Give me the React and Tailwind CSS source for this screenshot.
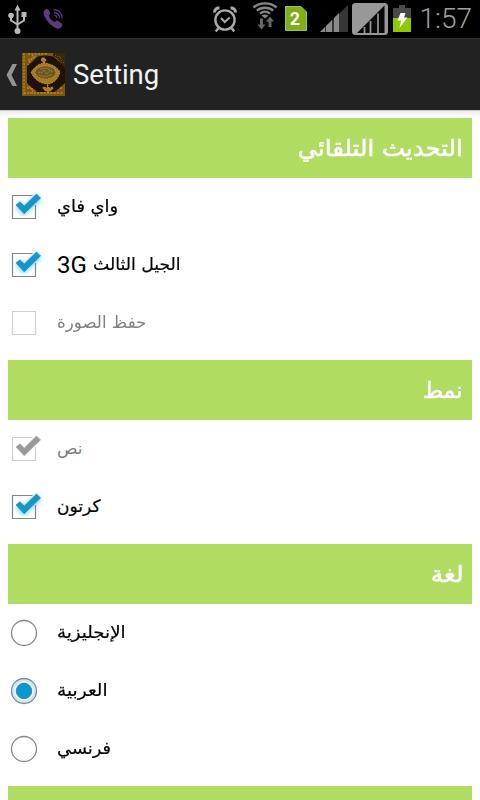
import React from 'react';

function StatusBar() {
  return (
    <div className="relative flex h-[38px] shrink-0 bg-black">
      <svg width="480" height="38" viewBox="0 0 480 38" className="block">
        {/* USB */}
        <g fill="none" stroke="#b8b8b8" strokeWidth="2">
          <path d="M17.500 8V31M11 17v3.500l6.500 4M24 16v4.500l-6.500 4" />
        </g>
        <g fill="#b8b8b8">
          <path d="M17.500 4.500l3 6h-6z" />
          <circle cx="11" cy="15.500" r="2.800" />
          <rect x="21.500" y="12" width="5" height="5" />
          <circle cx="17.500" cy="31" r="3" />
        </g>
        {/* Call */}
        <path
          d="M45.500 9.500c1.500-1 2.500-.5 3.300.8l1.200 2.400c.5 1.200 0 2-1.300 2.800 1 3 3 5.300 6 6.700 1-1.500 2-1.800 3.200-1.200l3.300 2c1.300.9 1.500 2 .7 3.300-1.300 2-3 2.900-5 2.200C50.500 26 46 20.500 43.700 14c-.6-2 .2-3.500 1.800-4.500z"
          fill="#5e3a80"
        />
        <g fill="none" stroke="#5e3a80" strokeWidth="1.300">
          <path d="M53.500 9.500c5 .2 8.700 3.700 8.700 9M54 12.500c3.500.3 5.500 2.500 5.600 5.700M54.500 15.300c1.500.2 2.300 1 2.500 2.500" />
        </g>
        {/* Alarm clock */}
        <g fill="none" stroke="#aaaaaa" strokeWidth="2.400">
          <circle cx="225" cy="20" r="9.600" />
          <path d="M221 18l3.700 4 5-4.500" strokeWidth="2" />
          <path d="M214.500 12.500c0-3 2-4.800 5-4.500M235.500 12.500c0-3-2-4.800-5-4.500" strokeWidth="3" />
          <path d="M218.500 28l-2.700 3.500M231.500 28l2.700 3.500" />
        </g>
        {/* Wi-Fi */}
        <g fill="none" stroke="#858585" strokeWidth="2.400">
          <path d="M253.500 7.500c6-5.500 17-5.500 23 0M256.800 10.700c4.500-4 12-4 16.400 0M260 13.600c3-2.500 7-2.500 10 0" />
        </g>
        <path d="M261.500 15.500c2-1.500 5-1.500 7 0L265 18.500z" fill="#858585" />
        <path d="M260 18.500h3v6h2.500l-4 5-4-5h2.500zM268.500 27v-5.500H266l4-5 4 5h-2.500V27z" fill="#666666" />
        {/* SIM 2 */}
        <path d="M285.500 6.500H301l5.500 5.500v18.500h-21z" fill="#7fae16" stroke="#a0bd68" />
        <text x="295" y="25" textAnchor="middle" fontFamily="Roboto" fontWeight="700" fontSize="18" fill="#ffffff">2</text>
        {/* Signal */}
        <path d="M320 32L348 5v27z" fill="#363636" />
        <path d="M320 32h5v-5zM326 32h6V20l-6 6zM334 32h5V13l-5 5z" fill="#8b8b8b" />
        {/* Second signal */}
        <rect x="352" y="3" width="36" height="32" rx="3.500" fill="#989898" />
        <path d="M357 33L384.500 5.500V33z" fill="#080808" />
        <path d="M364.500 27v6M370.500 21v12M378 13.500V33" stroke="#989898" strokeWidth="1.700" />
        {/* Battery */}
        <path d="M399 5h6v3h6v11h-18V8h6z" fill="#484848" />
        <rect x="393" y="18" width="18" height="14" fill="#91c900" />
        <path d="M400.500 13h5l-1.500 4.500h3.500L399.500 28l1.500-7.500h-3.500z" fill="#ffffff" />
      </svg>
      <span className="absolute top-0 right-[8px] h-[38px] font-[Roboto,sans-serif] text-[28px] leading-[38px] font-light text-[#a0a0a0]">1:57</span>
    </div>
  );
}

function BookIcon() {
  return (
    <svg width="43" height="43" viewBox="0 0 43 43" className="ml-[5px] shrink-0">
      <rect width="43" height="43" fill="#7d5710" />
      <g fill="none" stroke="#c08b20" strokeWidth="1.300" strokeDasharray="2 1.300">
        <path d="M2 0v43M2 40h39M6 13c1-5 4-8 9-10M6 7c3 0 5-2 5-5M6 30c1 5 5 7 11 8M5 35c4 0 5 1 6 4M40 30c-1 5-5 7-11 8M40 35c-4 0-6 1-7 4M6 1h20" />
      </g>
      <path d="M15 4c4-2 12-2 17 0l11 10v16c-3 3-7 6-10 9H15C13 36 8 34 5 30V13c3-2 7-6 10-9z" fill="#1f1208" />
      <path d="M31 0h12v15C38 10 37 5 31 3z" fill="#3a2608" />
      <path d="M33 2l3 2 2-1 1 4 3 3" fill="none" stroke="#76551a" strokeDasharray="1.500 1" />
      <path
        d="M21 5c3 0 4 2 1 5 8 1 13 4 16 9-2 7-6 11-12 12-1 2-1 3 1 4l4-1c0 3-3 4-5 5-2-1-5-2-5-5l4 1c2-1 1-3 0-4-8-1-13-5-16-12 4-5 7-8 13-9-4-3-3-5-1-5z"
        fill="#a77a20"
        stroke="#d3a443"
        strokeWidth=".8"
        strokeDasharray="2 1"
      />
      <ellipse cx="23.500" cy="19.500" rx="10.500" ry="6.500" fill="#6e5522" stroke="#c29844" strokeWidth=".8" strokeDasharray="2 1" />
      <path d="M16 19l4 1 2-3 3 4 3-4 3 2M17 22c4 2 9 2 13-1M18 16c3-1 8-1 10 1" fill="none" stroke="#a58a48" strokeWidth=".8" strokeDasharray="2 .7" />
    </svg>
  );
}

function ActionBar() {
  return (
    <header className="flex h-[72px] shrink-0 items-center border-t border-[#303030] bg-[#222222] pl-[6px]">
      <svg width="11" height="22" viewBox="0 0 11 22" className="shrink-0">
        <path d="M6.500 0H11L5.500 11 11 22H6.500L.5 11z" fill="#949494" />
      </svg>
      <BookIcon />
      <h1 className="ml-[8px] font-[Roboto,sans-serif] text-[27.500px] leading-8 font-normal text-[#f3f3f3]">Setting</h1>
    </header>
  );
}

function Checkbox({ checked, disabled }) {
  return (
    <svg width="36" height="36" viewBox="0 0 36 36" className="shrink-0">
      <defs>
        <filter id="glow" x="-30%" y="-30%" width="160%" height="160%">
          <feGaussianBlur stdDeviation="2" />
        </filter>
      </defs>
      {checked && !disabled && <path d="M10 16l6 6L31 8" fill="none" stroke="#8edcfb" strokeWidth="8" filter="url(#glow)" />}
      <path
        d={checked ? 'M24.500 6.500h-20v23h23V16' : 'M4.500 6.500h23v23h-23z'}
        fill="none"
        stroke={disabled ? '#cecece' : '#858585'}
        strokeWidth="1.200"
      />
      {checked && <path d="M8 16l4-3.200 4.300 4.200L28.500 5l4 4-16.300 15.800z" fill={disabled ? '#999999' : '#1197c9'} stroke={disabled ? '#aaaaaa' : '#3885a5'} strokeWidth=".7" />}
    </svg>
  );
}

function Radio({ checked }) {
  return (
    <svg width="36" height="36" viewBox="0 0 36 36" className="shrink-0">
      <circle cx="16" cy="18" r="12.500" fill={checked ? '#c9e9f6' : '#ffffff'} stroke="#898989" strokeWidth="1.300" />
      {checked && <circle cx="16" cy="18" r="10" fill="#e6f5fb" />}
      {checked && <circle cx="16" cy="18" r="7.700" fill="#0799cf" stroke="#4388a4" />}
    </svg>
  );
}

function Option({ label, latin, stretch = '', type = 'checkbox', checked = false, disabled = false }) {
  return (
    <div className="flex h-[58px] items-center">
      {type === 'radio' ? <Radio checked={checked} /> : <Checkbox checked={checked} disabled={disabled} />}
      <span
        dir="ltr"
        className={`ml-[13px] flex items-center whitespace-nowrap pb-[2px] font-['DejaVu_Sans',sans-serif] text-[17px] leading-[24px] ${disabled ? 'text-[#808080]' : 'text-black'}`}
      >
        {latin && <span className="mt-[2px] mr-[6px] font-[Roboto,sans-serif] text-[24px]">{latin}</span>}
        <span
          dir="rtl"
          className={`inline-block origin-left ${disabled ? '' : '[-webkit-text-stroke:0.2px_black]'} ${stretch}`}
        >
          {label}
        </span>
      </span>
    </div>
  );
}

function Section({ title, stretch = '', children }) {
  return (
    <section className="mb-[8px] shrink-0">
      <h2 dir="rtl" className="flex h-[60px] items-center bg-[#b0dc61] pr-[9px] font-['DejaVu_Sans',sans-serif] text-[23px] font-normal text-white [-webkit-text-stroke:0.6px_white]">
        <span className={`inline-block origin-right ${stretch}`}>{title}</span>
      </h2>
      {children}
    </section>
  );
}

export default function App() {
  return (
    <div className="flex h-[800px] w-[480px] flex-col overflow-hidden bg-white">
      <StatusBar />
      <ActionBar />
      <div className="h-[8px] shrink-0 bg-linear-to-b from-[#b8b8b8] via-[#f0f0f0] via-20% to-white" />
      <main className="flex flex-col px-[8px]">
        <Section title="التحديث التلقائي" stretch="scale-x-[1.06]">
          <Option label="واي فاي" stretch="scale-x-[1.05]" checked />
          <Option label="الجيل الثالث" latin="3G" stretch="scale-x-[1.015]" checked />
          <Option label="حفظ الصورة" stretch="scale-x-[0.98]" disabled />
        </Section>
        <Section title="نمط" stretch="scale-x-[0.96]">
          <Option label="نص" checked disabled />
          <Option label="كرتون" checked />
        </Section>
        <Section title="لغة" stretch="scale-x-[1.07]">
          <Option type="radio" label="الإنجليزية" stretch="scale-x-[1.07]" />
          <Option type="radio" label="العربية" stretch="scale-x-[1.09]" checked />
          <Option type="radio" label="فرنسي" stretch="scale-x-[1.05]" />
        </Section>
        <Section title="" />
      </main>
    </div>
  );
}
